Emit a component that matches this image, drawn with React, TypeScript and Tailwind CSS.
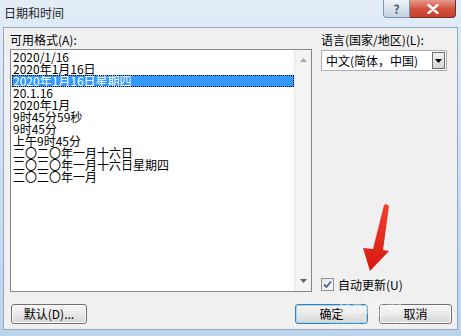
import React from "react";

const font = { fontFamily: '"Noto Sans CJK SC", "Noto Sans", sans-serif' };

const formats = [
  "2020/1/16",
  "2020年1月16日",
  "2020年1月16日星期四",
  "20.1.16",
  "2020年1月",
  "9时45分59秒",
  "9时45分",
  "上午9时45分",
  "二〇二〇年一月十六日",
  "二〇二〇年一月十六日星期四",
  "二〇二〇年一月",
];

function WinButton({ label, primary, width }: { label: string; primary?: boolean; width: string }) {
  return (
    <button
      className={`${width} h-[20px] rounded-[3px] border text-[12px] leading-none text-black bg-gradient-to-b from-[#f6f6f6] via-[#e9e9e9] to-[#d6d6d6] ${
        primary ? "border-[#3c7fb1] shadow-[inset_0_0_0_1px_#9fd6f5]" : "border-[#707070] shadow-[inset_0_0_0_1px_#fbfbfb]"
      }`}
    >
      {label}
    </button>
  );
}

export default function App() {
  return (
    <div
      className="relative w-[461px] h-[336px] overflow-hidden bg-gradient-to-b from-[#e3edf8] via-[#cddff1] to-[#bcd3ec] flex flex-col text-black"
      style={font}
    >
      {/* title bar */}
      <div className="h-[27px] flex items-start justify-between pl-[4px] pr-[5px]">
        <div className="mt-[6px] text-[12px] leading-[14px] text-[#1e1e1e]">日期和时间</div>
        <div className="flex">
          <div className="w-[27px] h-[18px] rounded-bl-[4px] border border-t-0 border-[#7f93ad] bg-gradient-to-b from-[#eef3f9] to-[#c5d3e3] flex items-center justify-center text-[12px] font-bold text-[#4b5a6e] leading-none">
            ?
          </div>
          <div className="w-[46px] h-[18px] rounded-br-[4px] border border-t-0 border-l-0 border-[#7a2b22] bg-gradient-to-b from-[#e59a8e] via-[#d4523f] to-[#c6402c] flex items-center justify-center">
            <svg width="12" height="10" viewBox="0 0 12 10">
              <path d="M1.5 1 L10.5 9 M10.5 1 L1.5 9" stroke="#fff" strokeWidth="2.4" strokeLinecap="round" />
            </svg>
          </div>
        </div>
      </div>

      {/* client area */}
      <div className="mx-[3px] h-[303px] border-t border-x border-b border-[#93a9c3] bg-[#f0f0f0] pl-[6px] pt-[5px] flex flex-col">
        <div className="flex gap-[9px]">
          <div className="w-[302px] flex flex-col">
            <div className="h-[16px] text-[12px] leading-[14px]">可用格式(A):</div>
            <div className="h-[243px] border border-[#828790] bg-white flex">
              <div className="flex-1 pt-[1px] pl-[1px]">
                {formats.map((f, i) => (
                  <div
                    key={f}
                    className={`h-[12px] text-[12px] leading-[12px] pl-[1px] whitespace-nowrap ${
                      i === 2 ? "bg-[#3399ff] text-white outline outline-1 outline-dotted outline-black -outline-offset-1" : ""
                    }`}
                  >
                    {f}
                  </div>
                ))}
              </div>
              <div className="w-[17px] bg-[#f4f4f4] border-l border-[#e6e6e6] flex flex-col justify-between items-center py-[8px]">
                <svg width="7" height="4" viewBox="0 0 7 4">
                  <path d="M0 4 L3.5 0 L7 4 Z" fill="#a8a8a8" />
                </svg>
                <svg width="7" height="4" viewBox="0 0 7 4">
                  <path d="M0 0 L3.5 4 L7 0 Z" fill="#606060" />
                </svg>
              </div>
            </div>
          </div>

          <div className="w-[126px] flex flex-col justify-between">
            <div>
              <div className="h-[17px] text-[12px] leading-[14px]">语言(国家/地区)(L):</div>
              <div className="h-[21px] border border-[#abadb3] bg-white flex items-center justify-between pl-[4px] pr-[1px]">
                <span className="text-[12px] leading-none">中文(简体，中国)</span>
                <div className="w-[13px] h-[17px] border border-[#707070] bg-gradient-to-b from-[#f2f2f2] to-[#d4d4d4] flex items-center justify-center">
                  <svg width="7" height="4" viewBox="0 0 7 4">
                    <path d="M0 0 L3.5 4 L7 0 Z" fill="#000" />
                  </svg>
                </div>
              </div>
            </div>
            <div className="flex items-center gap-[4px] mb-[1px]">
              <div className="w-[13px] h-[13px] border border-[#8e8f8f] bg-gradient-to-br from-[#e6e6e6] to-[#fbfbfb] flex items-center justify-center">
                <svg width="9" height="9" viewBox="0 0 9 9">
                  <path d="M1 4.5 L3.5 7 L8 1.5" stroke="#4a5f97" strokeWidth="1.8" fill="none" />
                </svg>
              </div>
              <span className="text-[12px] leading-none">自动更新(U)</span>
            </div>
          </div>
        </div>

        <div className="mt-[12px] flex items-center pl-[1px] pr-[5px]">
          <WinButton label="默认(D)..." width="w-[76px]" />
          <div className="flex-1" />
          <WinButton label="确定" width="w-[73px]" primary />
          <div className="w-[11px]" />
          <WinButton label="取消" width="w-[73px]" />
        </div>
      </div>

      {/* watermark */}
      <div className="absolute left-[338px] top-[296px] text-[20px] leading-none font-bold text-white/40 pointer-events-none">
        Bai<span className="text-[16px]">经验</span>
      </div>
      <div className="absolute left-[330px] top-[318px] text-[9px] leading-none text-white/30 pointer-events-none">
        jingyan.baidu.com
      </div>

      {/* red arrow annotation */}
      <svg className="absolute left-[355px] top-[200px]" width="40" height="75" viewBox="0 0 40 75">
        <defs>
          <linearGradient id="ar" x1="0" y1="0" x2="0" y2="1">
            <stop offset="0" stopColor="#f04030" />
            <stop offset="1" stopColor="#d8180f" />
          </linearGradient>
        </defs>
        <polygon points="31,4 34,6 28,50 34,51 15,71 8,48 18,49 29,5" fill="url(#ar)" />
      </svg>
    </div>
  );
}
